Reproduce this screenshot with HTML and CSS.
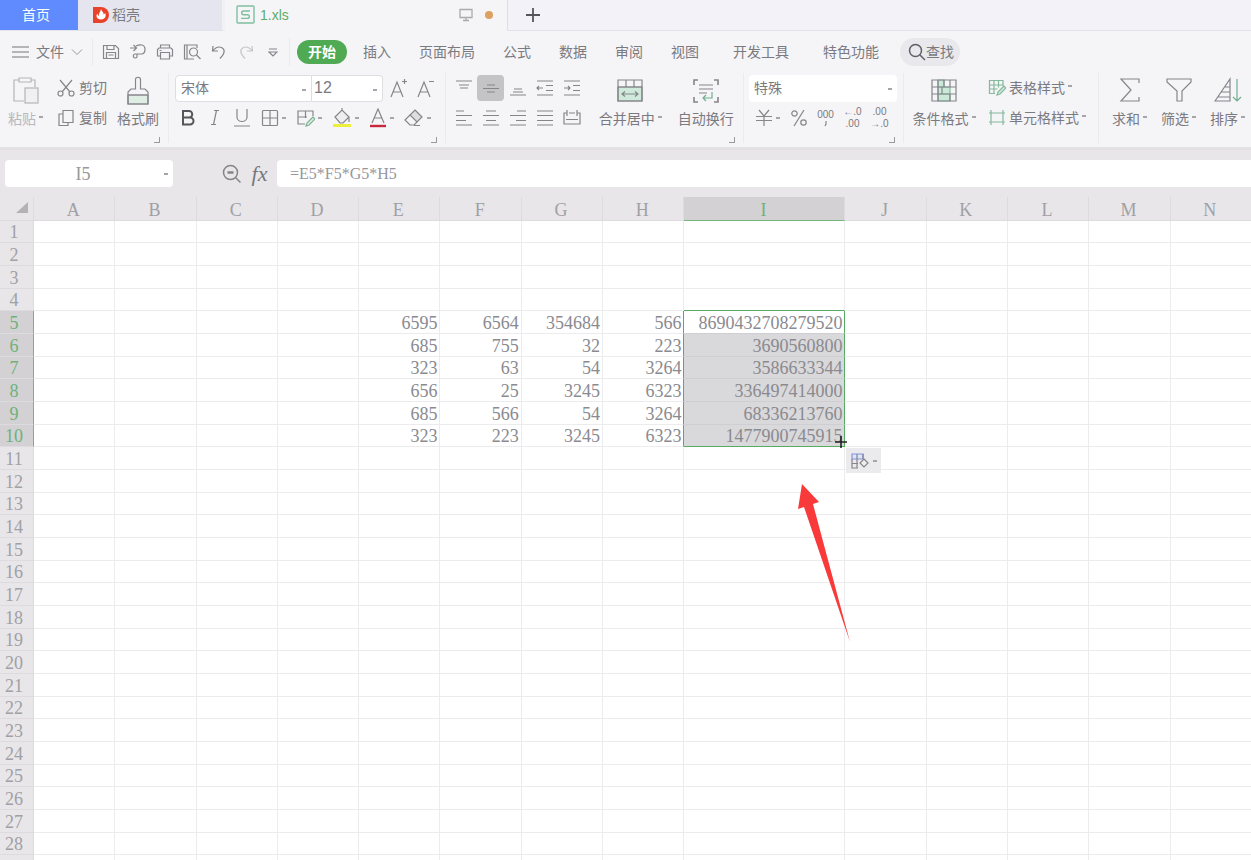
FILE: index.html
```html
<!DOCTYPE html>
<html lang="zh-CN">
<head>
<meta charset="utf-8">
<title>1.xls</title>
<link rel="stylesheet" href="styles.css">
</head>
<body>
<div class="app">
  <nav class="tabs" aria-label="文档">
    <button class="tab tab-home">首页</button>
    <button class="tab tab-docer">
      <svg width="16" height="18" viewBox="0 0 16 18"><path d="M0 1h8a8 8 0 0 1 0 16H0z" fill="#e8432a"/><path d="M8 3c1 3 3 3 2.500 5.500C12 8 12 7 12 6.500c1.500 3 .5 7-4 7s-5.500-4-3.500-6c0 1.500.5 2 1.500 2.500C5.500 7 7.500 6 8 3z" fill="#fff"/></svg>
      <span>稻壳</span>
    </button>
    <button class="tab tab-file">
      <svg width="20" height="20" viewBox="0 0 20 20" fill="none" stroke="#7fbf9f" stroke-width="1.400"><rect x="1" y="1" width="17" height="17" rx="1"/><path d="M14 6H7.500a1.800 1.800 0 0 0 0 3.700h4a1.800 1.800 0 0 1 0 3.700H5"/></svg>
      <span class="file-name">1.xls</span>
      <svg width="14" height="14" viewBox="0 0 14 14" fill="none" stroke="#aaaab0" stroke-width="1.300"><path d="M1 1.500h12v8H1zM7 9.500v3M4 12.500h6"/></svg>
      <span class="dot"></span>
    </button>
    <button class="tab tab-add" aria-label="新建"><svg width="14" height="14" viewBox="0 0 14 14" stroke="#55555c" stroke-width="1.800"><path d="M7 0v14M0 7h14"/></svg></button>
    <span class="tab-rest"></span>
  </nav>

  <nav class="menu" aria-label="菜单">
    <button class="file-menu">
      <svg width="17" height="14" viewBox="0 0 17 14" stroke="#77777c" stroke-width="1.200"><path d="M0 2h17M0 7h17M0 12h17"/></svg>
      <span>文件</span>
      <svg width="12" height="8" viewBox="0 0 12 8" fill="none" stroke="#99999f"><path d="M1 1.500l5 5 5-5"/></svg>
    </button>
    <div class="quick">
      <button aria-label="保存"><svg width="18" height="18" viewBox="0 0 18 18" class="ic"><path d="M1.500 2.500h12l3 3v10h-15zM5 2.500v4h7v-4M4.500 15.500v-6h9v6M6.500 12h5"/></svg></button>
      <button aria-label="输出"><svg width="18" height="18" viewBox="0 0 18 18" class="ic"><path d="M1 5h6M4.500 2L7.500 5l-3 3M7 3c2-1 4-1.500 6-1 4 1 4 8 0 9H8v3a2 2 0 1 1-2-3h3"/></svg></button>
      <button aria-label="打印"><svg width="18" height="18" viewBox="0 0 18 18" class="ic"><path d="M4.500 5V2h9v3M4.500 13h-3V6.500L3 5h12l1.500 1.500V13h-3M4.500 9.500h9V16h-9zM3.500 7.500h2"/></svg></button>
      <button aria-label="打印预览"><svg width="18" height="18" viewBox="0 0 18 18" class="ic"><path d="M14 5V2H1.500v14H11M4 2v14"/><circle cx="10.500" cy="9" r="4"/><path d="M13.500 12l4 4"/></svg></button>
      <button aria-label="撤销"><svg width="18" height="18" viewBox="0 0 18 18" class="ic"><path d="M3 3l-.5 5H8M2.500 8C5 5 8 3 11.500 4.500c4 2 3.500 6-1.500 11"/></svg></button>
      <button aria-label="恢复"><svg width="18" height="18" viewBox="0 0 18 18" class="ic pale"><path d="M15 3l.5 5H10M15.500 8C13 5 10 3 6.500 4.500c-4 2-3.500 6 1.500 11"/></svg></button>
      <button aria-label="自定义"><svg width="10" height="9" viewBox="0 0 10 9" class="ic"><path d="M1 1h8M1 4l4 4 4-4z"/></svg></button>
    </div>
    <div class="ribbon-tabs">
      <button class="active">开始</button>
      <button>插入</button>
      <button>页面布局</button>
      <button>公式</button>
      <button>数据</button>
      <button>审阅</button>
      <button>视图</button>
      <button class="long">开发工具</button>
      <button class="long">特色功能</button>
    </div>
    <button class="search">
      <svg width="18" height="18" viewBox="0 0 18 18" fill="none" stroke="#5f5f66" stroke-width="1.500"><circle cx="7.500" cy="7.500" r="6"/><path d="M12 12l5 5"/></svg>
      <span>查找</span>
    </button>
  </nav>

  <section class="ribbon" aria-label="开始">
    <div class="group clip">
      <button class="big off">
        <svg width="28" height="30" viewBox="0 0 28 30" class="ic"><path d="M7 4H2v21h10M19 4h4v7M7 2h12v4H7z"/><rect x="13" y="12" width="13" height="15" fill="#f0f0f2"/></svg>
        <span class="drop">粘贴</span>
      </button>
      <div class="stack">
        <button class="line"><svg width="18" height="18" viewBox="0 0 18 18" class="ic"><path d="M3 1l10 12M15 1L5 13"/><circle cx="3.500" cy="14.500" r="2.500"/><circle cx="14.500" cy="14.500" r="2.500"/></svg><span>剪切</span></button>
        <button class="line"><svg width="18" height="18" viewBox="0 0 18 18" class="ic"><path d="M6 1.500h10v12H6zM6 5H2v11.500h9v-3"/></svg><span>复制</span></button>
      </div>
      <button class="big">
        <svg width="24" height="30" viewBox="0 0 24 30" class="ic"><path d="M2 19h20v9H2z" fill="#dfeee5"/><path d="M9.500 3.500c0-3 5-3 5 0V13H19l3 3v12H2V16l3-3h4.500zM2 19h20"/></svg>
        <span>格式刷</span>
      </button>
      <button class="launch" aria-label="剪贴板"></button>
    </div>

    <div class="group font">
      <div class="row boxes">
        <label class="pick family"><select aria-label="字体"><option>宋体</option></select></label>
        <label class="pick size"><select aria-label="字号"><option>12</option></select></label>
        <button class="tool" aria-label="增大字号"><svg width="18" height="20" viewBox="0 0 18 20" class="ic"><path d="M1 19L7 4l6 15M3 14h8M14.500 1v5M12 3.500h5"/></svg></button>
        <button class="tool" aria-label="减小字号"><svg width="18" height="20" viewBox="0 0 18 20" class="ic"><path d="M1 19L7 4l6 15M3 14h8M12 3.500h5"/></svg></button>
      </div>
      <div class="row">
        <button class="tool" aria-label="加粗"><svg width="16" height="18" viewBox="0 0 16 18" fill="none" stroke="#55555b" stroke-width="2"><path d="M3 2h6a3 3 0 0 1 0 6.500H3zM3 8.500h7a3.500 3.500 0 0 1 0 7H3z"/></svg></button>
        <button class="tool" aria-label="倾斜"><svg width="16" height="18" viewBox="0 0 16 18" class="ic"><path d="M7 1.500h5M4 15.500h5M9.500 1.500l-3 14"/></svg></button>
        <button class="tool" aria-label="下划线"><svg width="18" height="18" viewBox="0 0 18 18" class="ic"><path d="M4 0v8c0 6 10 6 10 0V0M1 17h16"/></svg></button>
        <button class="tool drop" aria-label="边框"><svg width="18" height="18" viewBox="0 0 18 18" class="ic"><rect x="1.500" y="1.500" width="15" height="15" rx="1"/><path d="M9 1.500v15M1.500 9h15"/></svg></button>
        <button class="tool drop" aria-label="绘图边框"><svg width="18" height="18" viewBox="0 0 18 18" class="ic"><path d="M16 7V2H1v13h7M1 8h9M8.500 2v7"/><path d="M16 8l-6 6-1 3 3-1 6-6z" stroke="#7bb293" fill="#e2f0e8"/></svg></button>
        <button class="tool drop" aria-label="填充颜色"><svg width="20" height="20" viewBox="0 0 20 20" class="ic"><path d="M3 9l7-7 7 7-6 6H8zM10 2V0M17 9v5" fill="#eee"/><path d="M1 17.500h18" stroke="#eeee3c" stroke-width="3"/></svg></button>
        <button class="tool drop" aria-label="字体颜色"><svg width="18" height="20" viewBox="0 0 18 20" class="ic"><path d="M3 15L9 1l6 14M5 10h8"/><path d="M1 18h16" stroke="#c8283c" stroke-width="2.400"/></svg></button>
        <button class="tool drop" aria-label="清除"><svg width="20" height="18" viewBox="0 0 20 18" class="ic"><path d="M11 1l7 7-5 5-7-7z" fill="#ddd"/><path d="M6 6l-5 5 5 5h4l3-3M10 16.500h6"/></svg></button>
      </div>
      <button class="launch" aria-label="字体设置"></button>
    </div>

    <div class="group align">
      <div class="stack">
        <div class="row">
          <button class="tool" aria-label="顶端对齐"><svg width="18" height="18" viewBox="0 0 18 18" class="ic"><path d="M1 2h16M4 6h10M5 9h8"/></svg></button>
          <button class="tool on" aria-label="垂直居中"><svg width="18" height="18" viewBox="0 0 18 18" class="ic"><path d="M5 6h8M1 9.500h16M5 13h8"/></svg></button>
          <button class="tool" aria-label="底端对齐"><svg width="18" height="18" viewBox="0 0 18 18" class="ic"><path d="M5 10h8M4 13h10M1 16h16"/></svg></button>
          <button class="tool" aria-label="减少缩进"><svg width="18" height="18" viewBox="0 0 18 18" class="ic"><path d="M1 2h16M10 6.500h7M10 11.500h7M1 16h16M1 9h6M3 7L1 9l2 2"/></svg></button>
          <button class="tool" aria-label="增加缩进"><svg width="18" height="18" viewBox="0 0 18 18" class="ic"><path d="M1 2h16M10 6.500h7M10 11.500h7M1 16h16M1 9h6M5 7l2 2-2 2"/></svg></button>
        </div>
        <div class="row">
          <button class="tool" aria-label="左对齐"><svg width="18" height="18" viewBox="0 0 18 18" class="ic"><path d="M1 2h8M1 6.500h16M1 11.500h10M1 16h16"/></svg></button>
          <button class="tool" aria-label="居中"><svg width="18" height="18" viewBox="0 0 18 18" class="ic"><path d="M4 2h10M1 6.500h16M4 11.500h10M1 16h16"/></svg></button>
          <button class="tool" aria-label="右对齐"><svg width="18" height="18" viewBox="0 0 18 18" class="ic"><path d="M8 2h9M1 6.500h16M7 11.500h10M1 16h16"/></svg></button>
          <button class="tool" aria-label="两端对齐"><svg width="18" height="18" viewBox="0 0 18 18" class="ic"><path d="M1 2h16M1 6.500h16M1 11.500h16M1 16h16"/></svg></button>
          <button class="tool" aria-label="分散对齐"><svg width="18" height="18" viewBox="0 0 18 18" class="ic"><path d="M4 4H1v11h16V4h-3M4 1v6M14 1v6M6 4h6M3 10.500h12"/></svg></button>
        </div>
      </div>
      <button class="big merge">
        <svg width="28" height="30" viewBox="0 0 28 30" class="ic"><path d="M2 11h24v14H2z" fill="#cfeadb"/><path d="M2 4h24v21H2zM2 11h24M10 4v7M18 4v7M6 18h16M9 15.500L6 18l3 2.500M19 15.500l3 2.500-3 2.500"/></svg>
        <span class="drop">合并居中</span>
      </button>
      <button class="big">
        <svg width="28" height="30" viewBox="0 0 28 30" class="ic"><path d="M6 4H2v5M22 4h4v5M6 26H2v-5M22 26h4v-5" stroke-width="1.600"/><path d="M7 9h14M7 13h14M7 17h8"/><path d="M20 16v6h-8M14 19l-3 3 3 3" stroke="#6fae90"/></svg>
        <span>自动换行</span>
      </button>
      <button class="launch" aria-label="对齐设置"></button>
    </div>

    <div class="group number">
      <div class="row"><label class="pick format"><select aria-label="数字格式"><option>特殊</option></select></label></div>
      <div class="row">
        <button class="tool drop" aria-label="货币"><svg width="18" height="18" viewBox="0 0 18 18" class="ic"><path d="M4 1l5 6 5-6M9 7v10M1 7.500h16M1 11.500h16"/></svg></button>
        <button class="tool" aria-label="百分比"><svg width="18" height="18" viewBox="0 0 18 18" class="ic"><circle cx="4.500" cy="4.500" r="2.700"/><circle cx="13.500" cy="13.500" r="2.700"/><path d="M14 1L4 17"/></svg></button>
        <button class="tool mini"><span>000</span><svg width="4" height="6" viewBox="0 0 4 6" class="ic"><path d="M2 0v3l-1 2"/></svg></button>
        <button class="tool mini"><span>←.0</span><span>.00</span></button>
        <button class="tool mini"><span>.00</span><span>→.0</span></button>
      </div>
      <button class="launch" aria-label="数字设置"></button>
    </div>

    <div class="group style">
      <button class="big">
        <svg width="28" height="30" viewBox="0 0 28 30" class="ic"><path d="M8 4h6v7H8zM8 11h12v7H8zM8 18h12v7H8z" fill="#cbe8d8" stroke="#84b99c"/><path d="M2 4h24v21H2zM2 11h24M2 18h24M8 4v21M14 4v7M20 4v7M12 11v7M20 18v7"/></svg>
        <span class="drop">条件格式</span>
      </button>
      <div class="stack">
        <button class="line"><svg width="18" height="18" viewBox="0 0 18 18" class="ic green"><path d="M15 7V1.500H1.500v13H7M1.500 6h13M1.500 10h8M6 1.500v13M10.500 1.500v7"/><path d="M16 7l-6 6-1 3 3-1 6-6z" fill="#cfe8da"/></svg><span class="drop">表格样式</span></button>
        <button class="line"><svg width="18" height="18" viewBox="0 0 18 18" class="ic green"><path d="M3 1v15M15 1v15M1 4h16M1 13h16"/></svg><span class="drop">单元格样式</span></button>
      </div>
    </div>

    <div class="group edit">
      <button class="big"><svg width="28" height="30" viewBox="0 0 28 30" class="ic"><path d="M23 7V3H5l10 11L5 25h18v-4"/></svg><span class="drop">求和</span></button>
      <button class="big"><svg width="28" height="30" viewBox="0 0 28 30" class="ic"><path d="M2 3h24v3l-9 9v10h-5V15L2 6z"/></svg><span class="drop">筛选</span></button>
      <button class="big"><svg width="28" height="30" viewBox="0 0 28 30" class="ic"><path d="M1 25L16 3v22zM11 11h5M7 16h9M4 21h12"/><path d="M23 3v22M19 21l4 4 4-4" stroke="#6fae90"/></svg><span class="drop">排序</span></button>
    </div>
  </section>

  <section class="formula">
    <label class="pick name"><input aria-label="名称框" value="I5"></label>
    <svg class="lens" width="20" height="20" viewBox="0 0 20 20" fill="none" stroke="#84848a" stroke-width="1.500"><circle cx="8.500" cy="8.500" r="7"/><path d="M13.500 13.500l5 5"/><path d="M5.500 8.500h6" stroke-width="2.500"/></svg>
    <span class="fx">fx</span>
    <input class="expr" aria-label="编辑栏" value="=E5*F5*G5*H5">
  </section>

  <main class="sheet">
    <table class="grid">
      <thead><tr id="heads"></tr></thead>
      <tbody id="cells"></tbody>
    </table>
    <svg class="cursor" width="12" height="12" viewBox="0 0 12 12" stroke="#222" stroke-width="1.600"><path d="M6 0v12M0 6h12"/></svg>
    <button class="fill-options drop" aria-label="自动填充选项"><svg width="20" height="18" viewBox="0 0 20 18" class="ic"><path d="M2 2h11v5H2z" fill="#dfe4fb" stroke="#8594dc"/><path d="M7 2v14M2 7v9h6M2 11.500h6M13 2v5"/><path d="M14 7l4 4-4 4-4-4z" fill="#eee"/></svg></button>
    <svg class="arrow" width="54" height="160" viewBox="0 0 54 160"><path d="M5 0l17 18-6 2 37 138L7 23l-6 2z" fill="#f93a3a"/></svg>
  </main>
</div>
<script src="script.js"></script>
</body>
</html>
```

FILE: styles.css
```css
* { box-sizing: border-box; }
body {
  margin: 0;
  color: #7a7a7f;
  background: #fff;
  font: 14px/20px "Liberation Sans", "Noto Sans CJK SC", sans-serif;
}
button, input, select { margin: 0; padding: 0; border: 0; background: none; color: inherit; font: inherit; }
button { display: flex; align-items: center; justify-content: center; white-space: nowrap; }
svg { display: block; flex: none; }
.ic { fill: none; stroke: #85858b; stroke-width: 1.2; }
.pale { stroke: #c5c5ca; }
.green { stroke: #84b99c; }

.app { display: flex; flex-direction: column; height: 100vh; overflow: hidden; }

/* Document tabs */
.tabs { display: flex; height: 31px; flex: none; background: #f2f2f8; }
.tab { border-bottom: 1px solid #e2e2ea; }
.tab-home { width: 78px; padding-right: 6px; background: #5f8bff; color: #fff; }
.tab-docer { width: 147px; gap: 3px; padding-left: 15px; justify-content: flex-start; border-right: 3px solid #f0f0f5; background: #e4e5ef; }
.tab-file { width: 283px; padding: 0 14px 0 11px; gap: 4px; border-right: 1px solid #dedee6; border-bottom-color: #f5f4f7; background: #f5f4f7; }
.file-name { flex: 1; text-align: left; color: #5dad68; }
.dot { width: 8px; height: 8px; margin-left: 8px; border-radius: 50%; background: #dba15f; }
.tab-add { width: 50px; }
.tab-rest { flex: 1; border-bottom: 1px solid #e2e2ea; }

/* Menu line */
.menu { display: flex; align-items: center; flex: none; height: 42px; padding-left: 12px; background: #f5f4f7; }
.file-menu { gap: 7px; width: 81px; height: 28px; justify-content: flex-start; border-right: 1px solid #e9e9ee; }
.quick { display: flex; height: 28px; width: 197px; padding-left: 4px; border-right: 1px solid #e9e9ee; }
.quick button { width: 27px; }
.ribbon-tabs { display: flex; align-items: center; gap: 28px; padding-left: 7px; }
.ribbon-tabs .active { width: 50px; height: 24px; margin-right: -12px; border-radius: 12px; background: #50a953; color: #fff; font-weight: bold; }
.ribbon-tabs .long { margin-left: 6px; }
.search { height: 28px; margin-left: 21px; padding: 0 6px 0 8px; border-radius: 14px; background: #e9e9ed; }

/* Ribbon */
.ribbon { display: flex; flex: none; height: 77px; padding-bottom: 4px; overflow: hidden; background: #f5f4f7; border-bottom: 3px solid #e2e0e4; }
.group { position: relative; display: flex; flex: none; border-right: 1px solid #ebebef; }
.stack { display: flex; flex-direction: column; }
.row { display: flex; align-items: center; height: 30px; }
.big { flex-direction: column; justify-content: flex-start; padding-top: 3px; }
.big span { margin-top: 3px; }
.off { color: #b8b8bc; }
.off .ic { stroke: #b5b5ba; }
.line { height: 30px; gap: 3px; justify-content: flex-start; }
.tool { width: 27px; height: 26px; }
.on { border-radius: 4px; background: #c4c4c7; }
.drop::after { content: ""; flex: none; width: 4px; height: 2px; margin-left: 3px; background: #a5a5aa; }
.big .drop, .line .drop { display: flex; align-items: center; }
.big .drop::after, .line .drop::after { margin-bottom: 4px; }
.launch { position: absolute; right: 8px; bottom: 0; width: 6px; height: 6px; border-right: 1px solid #99999e; border-bottom: 1px solid #99999e; }
.clip { width: 169px; padding-left: 8px; }
.clip .stack { width: 60px; margin-left: 14px; }
.clip .line { gap: 4px; }
.font { flex-direction: column; width: 277px; padding-left: 5px; }
.pick { position: relative; display: flex; height: 27px; border-radius: 4px; background: #fff; }
.pick::after { content: ""; position: absolute; right: 5px; top: 13px; width: 4px; height: 2px; background: #a5a5aa; pointer-events: none; }
.pick select, .pick input { width: 100%; outline: 0; appearance: none; }
.pick select { padding-left: 5px; }
.boxes .pick { border: 1px solid #dddde2; }
.family { width: 137px; border-radius: 4px 0 0 4px; }
.boxes .size { width: 71px; border-left: 0; border-radius: 0 4px 4px 0; }
.size select { padding-left: 2px; font-size: 16px; }
.font .boxes { padding-left: 1px; }
.boxes .tool:first-of-type { margin-left: 2px; }
.tool.drop { width: 36px; }
.align { width: 298px; padding-left: 4px; }
.align .big { width: 76px; }
.align .merge { width: 78px; margin-left: 7px; }
.number { flex-direction: column; width: 160px; padding-left: 5px; }
.format { width: 148px; }
.mini { flex-direction: column; font-size: 10px; line-height: 12px; }
.style { width: 195px; padding-left: 7px; }
.style .big { width: 66px; }
.style .stack { margin-left: 11px; }
.edit { padding-left: 6px; border: 0; }
.edit .big { width: 49px; }

/* Formula bar */
.formula { display: flex; align-items: center; flex: none; height: 47px; padding-left: 5px; background: #e8e6e9; color: #97979c; font-family: "Liberation Serif", serif; font-size: 16px; }
.name { width: 168px; }
.name input { padding-right: 12px; text-align: center; font-size: 18px; }
.lens { margin-left: 49px; }
.fx { width: 35px; text-align: center; font-size: 22px; font-style: italic; color: #77777d; }
.expr { flex: 1; min-width: 0; height: 27px; padding-left: 13px; border-radius: 4px 0 0 4px; background: #fff; }

/* Worksheet */
.sheet { position: relative; flex: 1; min-height: 0; overflow: hidden; }
.grid { width: calc(100% + 1px); table-layout: fixed; border-collapse: separate; border-spacing: 0; color: #8a8a90; font: 18px/20px "Liberation Serif", serif; }
.grid th, .grid td { height: 23px; padding: 1px 2px 0 0; border: 0 solid #ececef; border-width: 0 1px 1px 0; text-align: right; white-space: nowrap; }
.grid tbody tr:nth-child(3n+1) > * { height: 22px; }
.grid td, .grid tbody th { line-height: 18px; }
.grid th { background: #e8e6e9; color: #a0a0a5; font-weight: normal; text-align: center; border-color: #dddbdf; }
.grid thead th { height: 24px; padding-top: 3px; }
.grid .corner { width: 34px; padding: 0 5px 3px 0; }
.corner svg { margin-left: auto; }
.grid tbody th { padding-right: 5px; }
.grid .wide { width: 161px; }
.grid .picked { background: #d3d1d4; color: #6db27a; }
.grid thead .picked { border-bottom-color: #74b67c; }
.grid tbody .picked { border-right-color: #74b67c; }
.grid .sel { background: #d9d8da; border-right-color: #57ab62; border-bottom-color: #cfced2; }
.grid .first { background: #fff; }
.grid .edge-right { border-right-color: #57ab62; }
.grid .edge-bottom { border-bottom-color: #57ab62; }
.cursor { position: absolute; left: 835px; top: 239px; }
.fill-options { position: absolute; left: 846px; top: 251px; width: 35px; height: 25px; background: #ebebed; }
.arrow { position: absolute; left: 797px; top: 287px; }
```

FILE: script.js
```js
const columns = [..."ABCDEFGHIJKLMN"];
const data = {
  5: { E: 6595, F: 6564, G: 354684, H: 566, I: "8690432708279520" },
  6: { E: 685, F: 755, G: 32, H: 223, I: "3690560800" },
  7: { E: 323, F: 63, G: 54, H: 3264, I: "3586633344" },
  8: { E: 656, F: 25, G: 3245, H: 6323, I: "336497414000" },
  9: { E: 685, F: 566, G: 54, H: 3264, I: "68336213760" },
  10: { E: 323, F: 223, G: 3245, H: 6323, I: "1477900745915" }
};

document.getElementById("heads").innerHTML =
  '<th class="corner"><svg width="12" height="11" viewBox="0 0 12 11"><path d="M12 0v11H0z" fill="#b3b2b6"/></svg></th>' +
  columns.map(c => `<th${c === "I" ? ' class="wide picked"' : ""}>${c}</th>`).join("");

const rows = [];
for (let r = 1; r <= 29; r++) {
  const inRange = r >= 5 && r <= 10;
  const cells = columns.map(c => {
    const names = [];
    if (c === "I" && inRange) names.push("sel");
    if (c === "I" && r === 5) names.push("first");
    if (c === "H" && inRange) names.push("edge-right");
    if (c === "I" && (r === 4 || r === 10)) names.push("edge-bottom");
    const value = (data[r] && data[r][c]) || "";
    return `<td${names.length ? ` class="${names.join(" ")}"` : ""}>${value}</td>`;
  });
  rows.push(`<tr><th${inRange ? ' class="picked"' : ""}>${r}</th>${cells.join("")}</tr>`);
}
document.getElementById("cells").innerHTML = rows.join("");
```
